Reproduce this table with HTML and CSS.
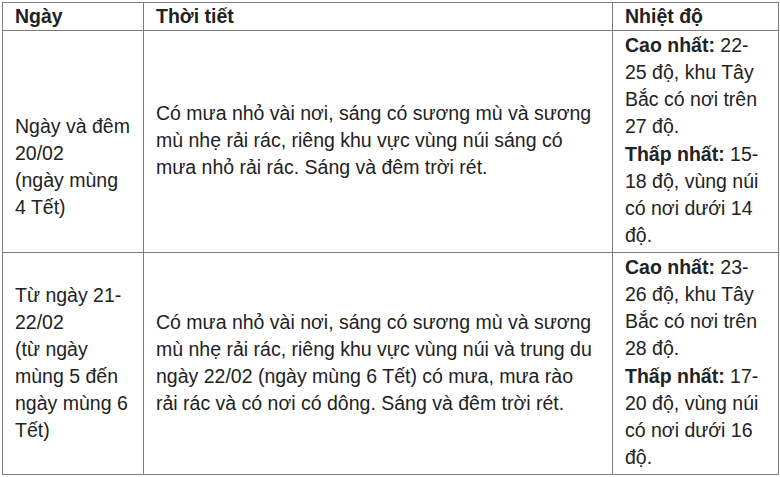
FILE: index.html
```html
<!DOCTYPE html>
<html lang="vi">
<head>
<meta charset="utf-8">
<title>Thời tiết Tết</title>
<link rel="stylesheet" href="styles.css">
</head>
<body>
<table class="weather">
  <colgroup>
    <col class="c-day">
    <col class="c-desc">
    <col class="c-temp">
  </colgroup>
  <thead>
    <tr>
      <th>Ngày</th>
      <th>Thời tiết</th>
      <th>Nhiệt độ</th>
    </tr>
  </thead>
  <tbody>
    <tr>
      <td class="day day-offset">Ngày và đêm 20/02<br>(ngày mùng 4 Tết)</td>
      <td class="desc">Có mưa nhỏ vài nơi, sáng có sương mù và sương mù nhẹ rải rác, riêng khu vực vùng núi sáng có mưa nhỏ rải rác. Sáng và đêm trời rét.</td>
      <td class="temp">
        <p><b>Cao nhất:</b> 22-25 độ, khu Tây Bắc có nơi trên 27 độ.</p>
        <p><b>Thấp nhất:</b> 15-18 độ, vùng núi có nơi dưới 14 độ.</p>
      </td>
    </tr>
    <tr>
      <td class="day">Từ ngày 21-22/02<br>(từ ngày mùng 5 đến ngày mùng 6 Tết)</td>
      <td class="desc">Có mưa nhỏ vài nơi, sáng có sương mù và sương mù nhẹ rải rác, riêng khu vực vùng núi và trung du ngày 22/02 (ngày mùng 6 Tết) có mưa, mưa rào rải rác và có nơi có dông. Sáng và đêm trời rét.</td>
      <td class="temp">
        <p><b>Cao nhất:</b> 23-26 độ, khu Tây Bắc có nơi trên 28 độ.</p>
        <p><b>Thấp nhất:</b> 17-20 độ, vùng núi có nơi dưới 16 độ.</p>
      </td>
    </tr>
  </tbody>
</table>
</body>
</html>
```

FILE: styles.css
```css
html, body {
  margin: 0;
  padding: 0;
  background: #ffffff;
}

body {
  font-family: "Liberation Sans", Arial, sans-serif;
  font-size: 19.5px;
  line-height: 27px;
  color: #222222;
}

.weather {
  margin: 2px 0 0 2px;
  width: 776px;
  border-collapse: collapse;
  table-layout: fixed;
  border: 1px solid #8c8c8c;
}

.c-day { width: 141px; }
.c-desc { width: 469px; }
.c-temp { width: 166px; }

.weather th,
.weather td {
  border: 1px solid #7d7d7d;
  padding: 0 12px;
  text-align: left;
}

.weather th {
  font-weight: bold;
  vertical-align: middle;
  padding-top: 0;
  padding-bottom: 0;
}

.weather td {
  vertical-align: middle;
  padding-top: 1px;
  padding-bottom: 3px;
}

.weather td.day-offset {
  padding-top: 54px;
}

.weather td.temp {
  vertical-align: top;
}

.temp p {
  margin: 0;
}

.temp p + p {
  margin-top: 1px;
}

.temp b {
  font-weight: bold;
}
```
